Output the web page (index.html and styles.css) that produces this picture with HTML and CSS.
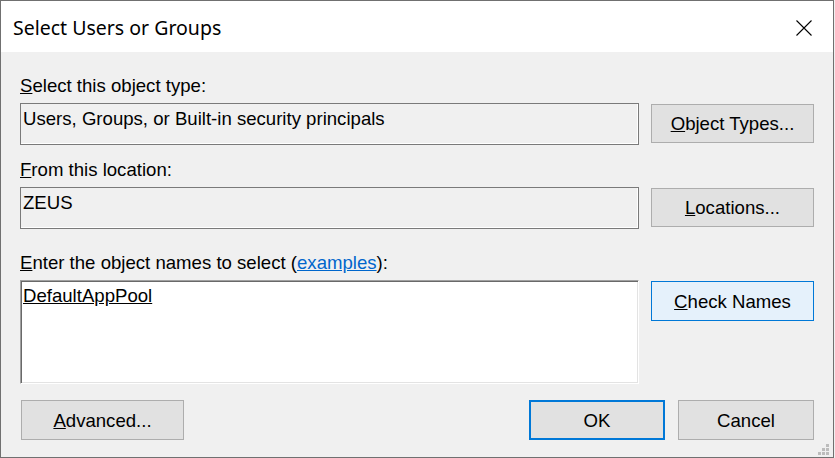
FILE: index.html
```html
<!DOCTYPE html>
<html lang="en">
<head>
<meta charset="utf-8">
<title>Select Users or Groups</title>
<link rel="stylesheet" href="styles.css">
</head>
<body>
<div class="window">
  <div class="titlebar">
    <span class="title">Select Users or Groups</span>
    <span class="close" aria-label="Close">
      <svg width="16" height="16" viewBox="0 0 16 16"><path d="M0.5 0.5 L15.5 15.5 M15.5 0.5 L0.5 15.5" stroke="#000" stroke-width="1.1" fill="none"/></svg>
    </span>
  </div>
  <div class="content">
    <div class="label l1"><u>S</u>elect this object type:</div>
    <div class="row">
      <div class="field">Users, Groups, or Built-in security principals</div>
      <div class="btn side">
        <span><u>O</u>bject Types...</span>
      </div>
    </div>

    <div class="label l2"><u>F</u>rom this location:</div>
    <div class="row">
      <div class="field">ZEUS</div>
      <div class="btn side">
        <span><u>L</u>ocations...</span>
      </div>
    </div>

    <div class="label l3"><u>E</u>nter the object names to select (<a class="link" href="#">examples</a>):</div>
    <div class="row">
      <div class="names"><u>DefaultAppPool</u></div>
      <div class="btn side hot">
        <span><u>C</u>heck Names</span>
      </div>
    </div>

    <div class="footer">
      <div class="btn adv"><span><u>A</u>dvanced...</span></div>
      <div class="spacer"></div>
      <div class="btn ok default"><span>OK</span></div>
      <div class="btn cancel"><span>Cancel</span></div>
    </div>
  </div>
  <div class="grip">
    <i class="d1"></i><i class="d2"></i><i class="d3"></i><i class="d4"></i><i class="d5"></i><i class="d6"></i>
  </div>
</div>
</body>
</html>
```

FILE: styles.css
```css
* { box-sizing: border-box; }

html, body {
  margin: 0;
  padding: 0;
  background: #f0f0f0;
}

.window {
  position: relative;
  width: 834px;
  height: 458px;
  border: 1px solid #707070;
  background: #f0f0f0;
  font-family: "Liberation Sans", Arial, sans-serif;
  font-size: 18.6px;
  color: #000;
  display: flex;
  flex-direction: column;
}

.titlebar {
  height: 51px;
  background: #fff;
  display: flex;
  align-items: center;
  padding-left: 12px;
  padding-right: 21px;
}

.title {
  flex: 1;
  font-family: "Noto Sans", "Open Sans", sans-serif;
  font-size: 19.5px;
  padding-top: 2px;
}

.close {
  display: flex;
  width: 16px;
  height: 16px;
  margin-top: 2px;
}

.content {
  flex: 1;
  padding: 0 19px 0 19px;
  display: flex;
  flex-direction: column;
}

.label {
  height: 20px;
  line-height: 20px;
  white-space: nowrap;
}
.l1 { margin-top: 24px; margin-bottom: 7px; }
.l2 { margin-top: 15px; margin-bottom: 7px; }
.l3 { margin-top: 24px; margin-bottom: 7px; }

.link {
  color: #0066cc;
  text-decoration: underline;
}

.row {
  display: flex;
  align-items: flex-start;
  gap: 12px;
}

.field {
  flex: 1;
  height: 42px;
  border: 1px solid #7a7a7a;
  box-shadow: inset -1px -1px 0 #ffffff;
  padding: 5px 0 0 2px;
  line-height: 20px;
  white-space: nowrap;
}

.names {
  flex: 1;
  height: 104px;
  background: #fff;
  border-top: 1px solid #a0a0a0;
  border-left: 1px solid #a0a0a0;
  border-right: 1px solid #ffffff;
  border-bottom: 1px solid #ffffff;
  box-shadow: inset 1px 1px 0 #696969, inset -1px -1px 0 #e3e3e3;
  padding: 5px 0 0 2px;
  line-height: 20px;
}

.btn {
  display: flex;
  align-items: center;
  justify-content: center;
  height: 40px;
  background: #e1e1e1;
  border: 1px solid #adadad;
  line-height: 20px;
  white-space: nowrap;
}

.btn span { padding-top: 1px; }

.side {
  width: 163px;
  margin-top: 1px;
  height: 39px;
}

.hot {
  background: #e5f1fb;
  border-color: #0078d7;
  height: 40px;
}

.footer {
  display: flex;
  align-items: center;
  margin-top: 16px;
  padding-left: 1px;
}

.adv { width: 163px; }
.spacer { flex: 1; }
.ok { width: 136px; }
.default {
  border: 2px solid #0078d7;
}
.cancel { width: 136px; margin-left: 13px; }

.grip {
  position: absolute;
  right: 4px;
  bottom: 2px;
  width: 11px;
  height: 11px;
}
.grip i {
  position: absolute;
  width: 3px;
  height: 3px;
  background: #bcbcbc;
}
.grip .d1 { right: 0; bottom: 0; }
.grip .d2 { right: 4px; bottom: 0; }
.grip .d3 { right: 8px; bottom: 0; }
.grip .d4 { right: 0; bottom: 4px; }
.grip .d5 { right: 4px; bottom: 4px; }
.grip .d6 { right: 0; bottom: 8px; }
```
